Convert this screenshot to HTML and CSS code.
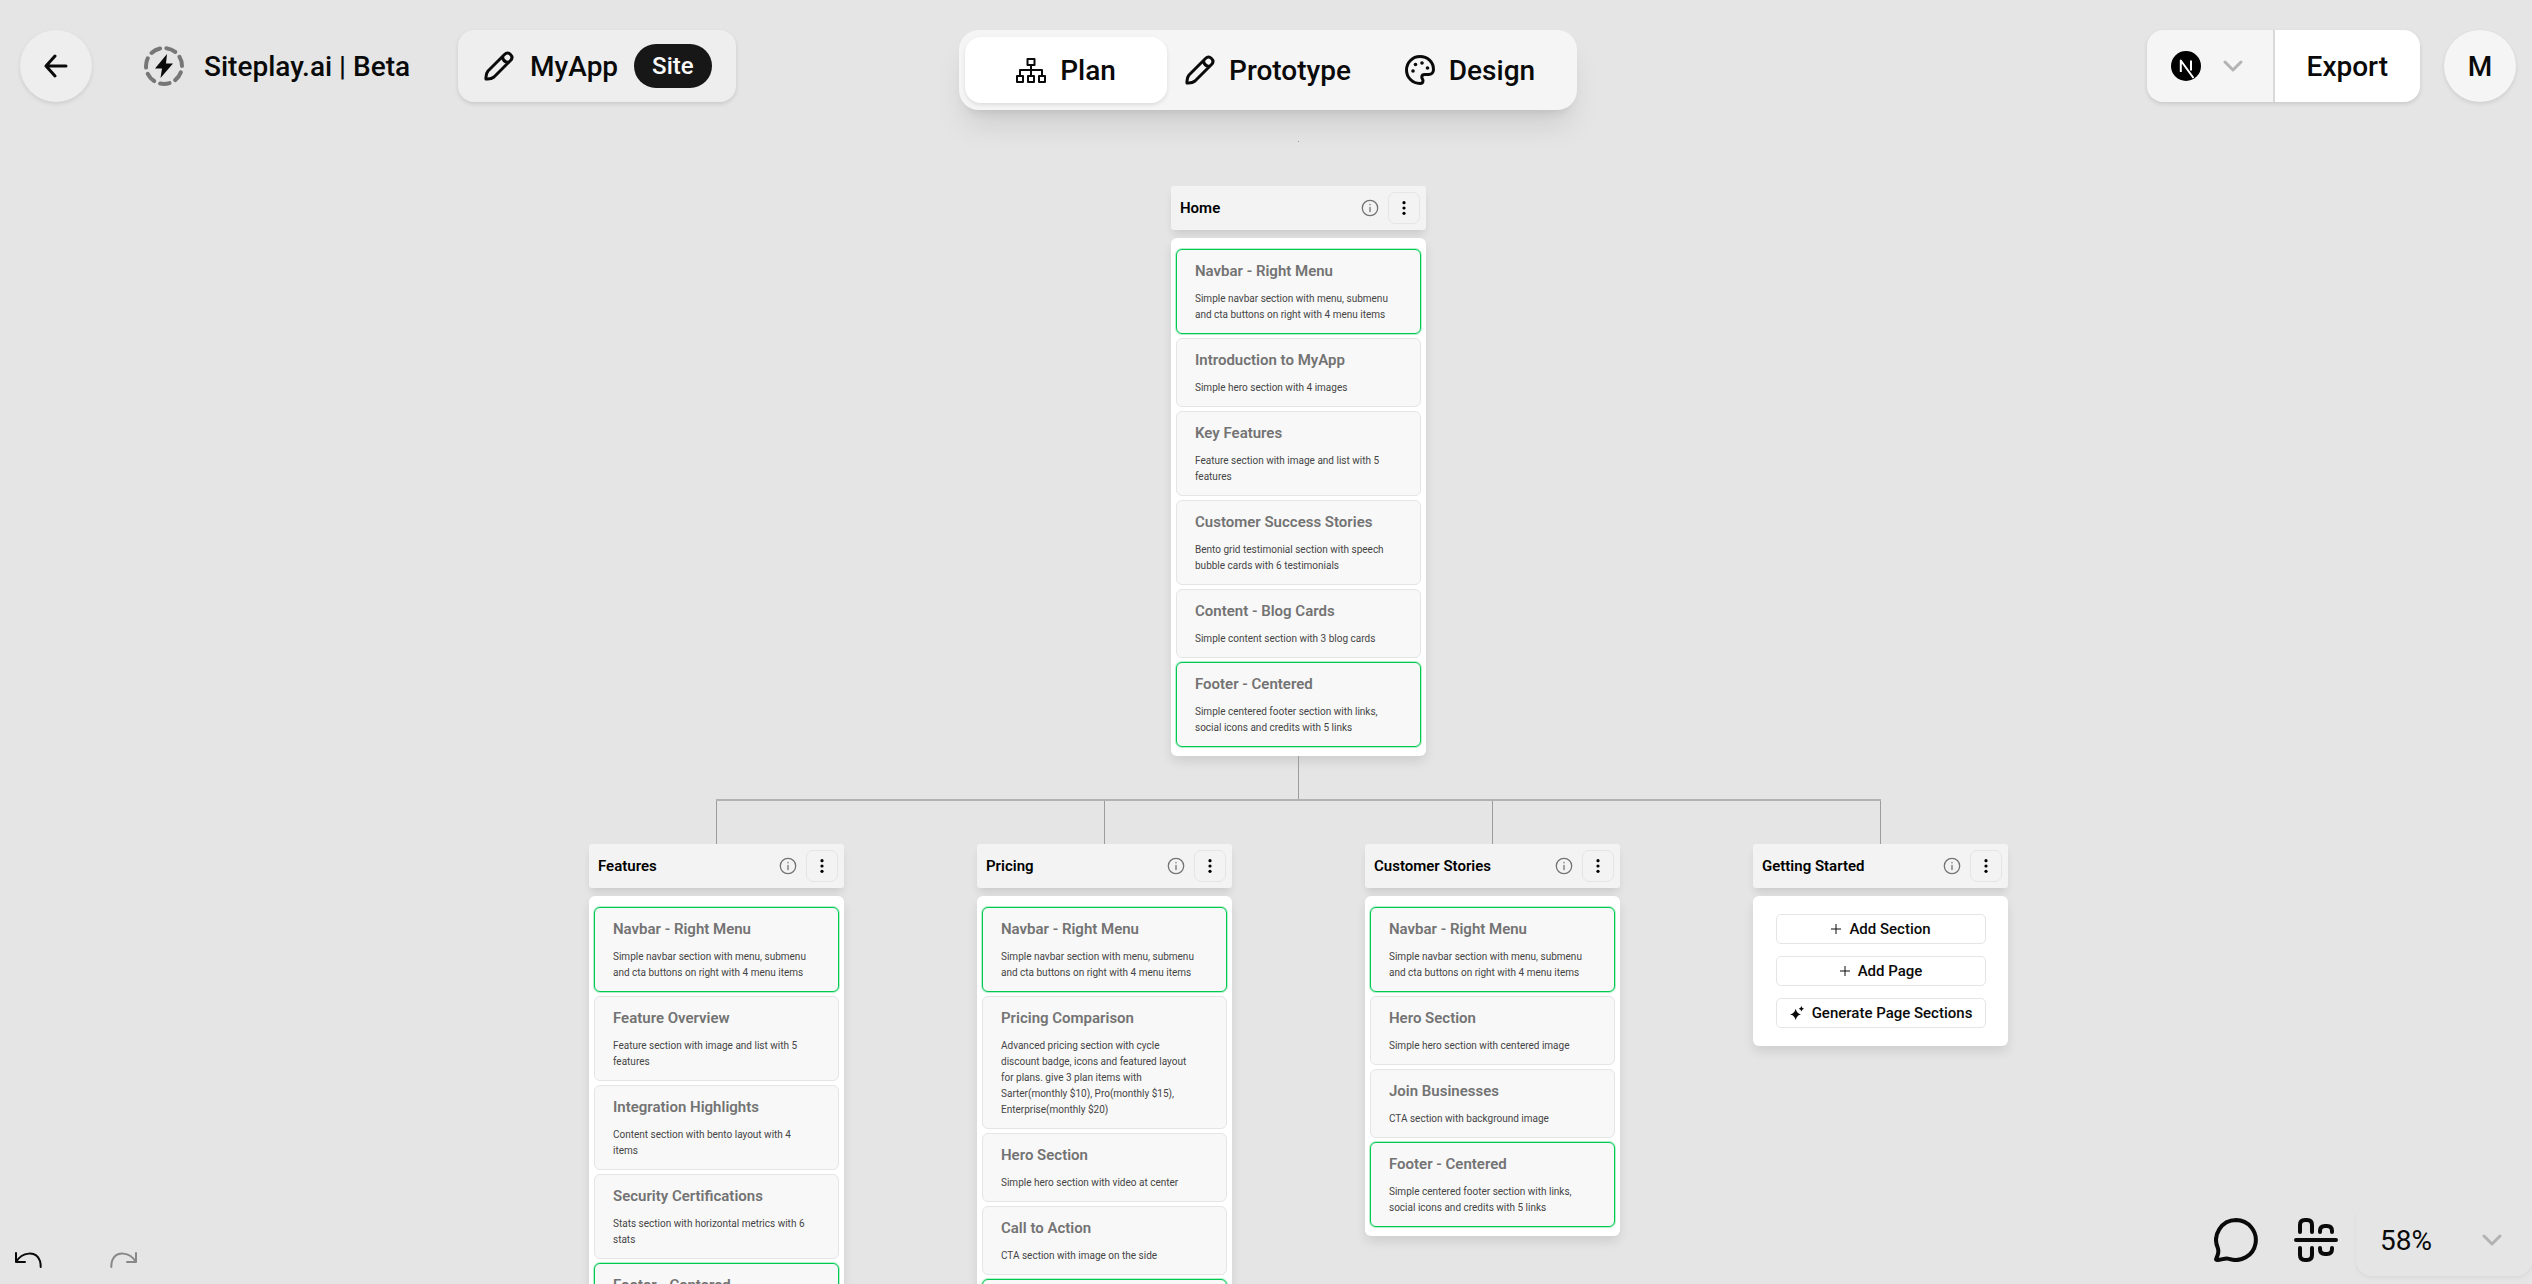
FILE: index.html
```html
<!DOCTYPE html>
<html lang="en">
<head>
<meta charset="utf-8">
<title>MyApp - Siteplay.ai</title>
<meta name="viewport" content="width=device-width, initial-scale=1">
<link rel="stylesheet" href="styles.css">
</head>
<body>
<svg class="sprite" aria-hidden="true">
  <symbol id="pencil" viewBox="0 0 30 30"><path d="M2 28Q1.500 23 4 20L20.500 3.500Q23.500 .500 26.500 3.500T26.500 9.500L10 26Q7 28.500 2 28ZM18.500 5.500Q19 11 24.500 11.500"/></symbol>
  <symbol id="chevron" viewBox="0 0 20 12"><path d="m2 2 8 8 8-8"/></symbol>
  <symbol id="info" viewBox="0 0 18 18"><circle cx="9" cy="9" r="7.700"/><path d="M9 8.500V12.500M9 5.400V5.800"/></symbol>
  <symbol id="dots" viewBox="0 0 16 16"><circle cx="8" cy="2.700" r="1.600"/><circle cx="8" cy="8" r="1.600"/><circle cx="8" cy="13.300" r="1.600"/></symbol>
  <symbol id="plus" viewBox="0 0 10 10"><path d="M5 0v10M0 5h10"/></symbol>
</svg>

<main class="canvas">
  <div class="tree">
    <span class="origin"></span>
    <article class="page">
      <header class="page-head"><h2>Home</h2><svg class="info"><use href="#info"/></svg><button class="more" aria-label="Home options"><svg><use href="#dots"/></svg></button></header>
      <div class="sections">
        <section class="item shared"><h3>Navbar - Right Menu</h3><p>Simple navbar section with menu, submenu and cta buttons on right with 4 menu items</p></section>
        <section class="item"><h3>Introduction to MyApp</h3><p>Simple hero section with 4 images</p></section>
        <section class="item"><h3>Key Features</h3><p>Feature section with image and list with 5 features</p></section>
        <section class="item"><h3>Customer Success Stories</h3><p>Bento grid testimonial section with speech bubble cards with 6 testimonials</p></section>
        <section class="item"><h3>Content - Blog Cards</h3><p>Simple content section with 3 blog cards</p></section>
        <section class="item shared"><h3>Footer - Centered</h3><p>Simple centered footer section with links, social icons and credits with 5 links</p></section>
      </div>
    </article>
    <span class="stem"></span>
    <span class="rail"></span>
    <div class="branches">
      <div class="branch">
        <span class="stem"></span>
        <article class="page">
          <header class="page-head"><h2>Features</h2><svg class="info"><use href="#info"/></svg><button class="more" aria-label="Features options"><svg><use href="#dots"/></svg></button></header>
          <div class="sections">
            <section class="item shared"><h3>Navbar - Right Menu</h3><p>Simple navbar section with menu, submenu and cta buttons on right with 4 menu items</p></section>
            <section class="item"><h3>Feature Overview</h3><p>Feature section with image and list with 5 features</p></section>
            <section class="item"><h3>Integration Highlights</h3><p>Content section with bento layout with 4 items</p></section>
            <section class="item"><h3>Security Certifications</h3><p>Stats section with horizontal metrics with 6 stats</p></section>
            <section class="item shared"><h3>Footer - Centered</h3><p>Simple centered footer section with links, social icons and credits with 5 links</p></section>
          </div>
        </article>
      </div>
      <div class="branch">
        <span class="stem"></span>
        <article class="page">
          <header class="page-head"><h2>Pricing</h2><svg class="info"><use href="#info"/></svg><button class="more" aria-label="Pricing options"><svg><use href="#dots"/></svg></button></header>
          <div class="sections">
            <section class="item shared"><h3>Navbar - Right Menu</h3><p>Simple navbar section with menu, submenu and cta buttons on right with 4 menu items</p></section>
            <section class="item"><h3>Pricing Comparison</h3><p>Advanced pricing section with cycle discount badge, icons and featured layout for plans. give 3 plan items with Sarter(monthly $10), Pro(monthly $15), Enterprise(monthly $20)</p></section>
            <section class="item"><h3>Hero Section</h3><p>Simple hero section with video at center</p></section>
            <section class="item"><h3>Call to Action</h3><p>CTA section with image on the side</p></section>
            <section class="item shared"><h3>Footer - Centered</h3><p>Simple centered footer section with links, social icons and credits with 5 links</p></section>
          </div>
        </article>
      </div>
      <div class="branch">
        <span class="stem"></span>
        <article class="page">
          <header class="page-head"><h2>Customer Stories</h2><svg class="info"><use href="#info"/></svg><button class="more" aria-label="Customer Stories options"><svg><use href="#dots"/></svg></button></header>
          <div class="sections">
            <section class="item shared"><h3>Navbar - Right Menu</h3><p>Simple navbar section with menu, submenu and cta buttons on right with 4 menu items</p></section>
            <section class="item"><h3>Hero Section</h3><p>Simple hero section with centered image</p></section>
            <section class="item"><h3>Join Businesses</h3><p>CTA section with background image</p></section>
            <section class="item shared"><h3>Footer - Centered</h3><p>Simple centered footer section with links, social icons and credits with 5 links</p></section>
          </div>
        </article>
      </div>
      <div class="branch">
        <span class="stem"></span>
        <article class="page">
          <header class="page-head"><h2>Getting Started</h2><svg class="info"><use href="#info"/></svg><button class="more" aria-label="Getting Started options"><svg><use href="#dots"/></svg></button></header>
          <div class="actions">
            <button><svg class="plus"><use href="#plus"/></svg>Add Section</button>
            <button><svg class="plus"><use href="#plus"/></svg>Add Page</button>
            <button><svg class="spark" viewBox="0 0 16 16"><path d="M6.500 3Q7.700 8.300 12.500 9.500 7.700 10.700 6.500 16 5.300 10.700 0 9.500 5.300 8.300 6.500 3ZM13 0Q13.500 2.500 16 3.200 13.500 3.900 13 6.400 12.500 3.900 10 3.200 12.500 2.500 13 0Z"/></svg>Generate Page Sections</button>
          </div>
        </article>
      </div>
    </div>
  </div>
</main>

<header class="topbar">
  <div class="top-left">
    <button class="round" aria-label="Back"><svg class="back" viewBox="0 0 24 24"><path d="M22 12H2M11 2 2 12l9 10"/></svg></button>
    <a class="brand" href="#"><svg class="logo" viewBox="0 0 40 40"><circle cx="20" cy="20" r="18" pathLength="70"/><path d="M23 8 11 22.500h7L16.500 32 29 17.500h-7Z"/></svg>Siteplay.ai | Beta</a>
    <div class="project"><svg class="pencil"><use href="#pencil"/></svg><span>MyApp</span><span class="badge">Site</span></div>
  </div>
  <nav class="tabs">
    <button class="tab active"><svg class="sitemap" viewBox="0 0 30 30"><path d="M11.500 4h7v6h-7ZM15 10v11M4 21v-6h22v6M1 21h6v6H1ZM12 21h6v6h-6ZM23 21h6v6h-6Z"/></svg>Plan</button>
    <button class="tab"><svg class="pencil"><use href="#pencil"/></svg>Prototype</button>
    <button class="tab"><svg class="palette" viewBox="0 0 30 30"><path d="M15 1.500C7.500 1.500 1.500 7.500 1.500 15S7.500 28.500 15 28.500c2 0 3-1 3-2.700 0-1.500-1.200-2-1.200-3.600 0-1.700 1.300-2.700 3-2.700h3.700c3 0 5-2 5-5C28.500 7 22.500 1.500 15 1.500Z"/><g><circle cx="8" cy="16" r="1.800"/><circle cx="10.500" cy="9.500" r="1.800"/><circle cx="17" cy="8" r="1.800"/><circle cx="22.500" cy="13" r="1.800"/></g></svg>Design</button>
  </nav>
  <div class="top-right">
    <div class="export">
      <button class="framework" aria-label="Framework: Next.js" aria-haspopup="listbox"><svg class="next" viewBox="0 0 30 30"><circle cx="15" cy="15" r="15"/><path d="M9.800 21V9.500L22.500 27M20 9.500v10"/></svg><svg class="chevron"><use href="#chevron"/></svg></button>
      <button class="export-btn">Export</button>
    </div>
    <button class="round account" aria-label="Account M">M</button>
  </div>
</header>

<footer class="bottombar">
  <div class="history">
    <button aria-label="Undo"><svg viewBox="0 0 28 18"><path d="M2 2v9h9M2 11C8 1 22-1 26 10q.7 2.500 .7 6"/></svg></button>
    <button aria-label="Redo" disabled><svg viewBox="0 0 28 18"><path d="M26 2v9h-9M26 11C20 1 6-1 2 10q-.7 2.500-.7 6"/></svg></button>
  </div>
  <div class="tools">
    <button aria-label="Comments"><svg viewBox="0 0 44 44"><path d="M22 2a20 20 0 1 1-7 38.800C11 39.500 8 42 3.200 42 1 42 2.500 40 3.500 37.500S4.800 33 3.800 30A20 20 0 0 1 22 2Z"/></svg></button>
    <button aria-label="Align"><svg viewBox="0 0 44 44"><path d="M2 22h40M6 14V7q0-5 5-5h2q5 0 5 5v7M6 30v7q0 5 5 5h2q5 0 5-5v-7M26 14v-1q0-5 5-5h2q5 0 5 5v1M26 30v1q0 5 5 5h2q5 0 5-5v-1"/></svg></button>
    <label class="zoom"><select aria-label="Zoom level"><option>58%</option><option>100%</option></select><svg class="chevron"><use href="#chevron"/></svg></label>
  </div>
</footer>
</body>
</html>
```
FILE: styles.css
```css
* { box-sizing: border-box; }
html, body { height: 100%; }
body {
  margin: 0;
  background: #e5e5e5;
  color: #0a0a0a;
  font-family: Roboto, "Liberation Sans", sans-serif;
  overflow: hidden;
  display: flex;
  flex-direction: column;
  justify-content: space-between;
}
h2, h3, p { margin: 0; }
button, select { font: inherit; color: inherit; border: 0; background: none; padding: 0; }
svg { fill: none; stroke: currentColor; flex: none; stroke-linecap: round; stroke-linejoin: round; }
.sprite { position: absolute; width: 0; height: 0; }

/* Top bar */
.topbar {
  position: relative;
  display: grid;
  grid-template-columns: 1fr auto 1fr;
  align-items: start;
  padding: 30px 16px 0 20px;
  font-size: 28px;
  font-weight: 500;
}
.top-left, .top-right { display: flex; align-items: center; }
.top-right { justify-content: flex-end; gap: 24px; }
.round {
  width: 72px;
  height: 72px;
  border-radius: 50%;
  background: #eee;
  display: flex;
  align-items: center;
  justify-content: center;
  box-shadow: 0 2px 4px rgb(0 0 0 / 10%);
}
.account { background: #f5f5f5; }
.back { width: 24px; height: 24px; stroke-width: 3; }
.brand {
  display: flex;
  align-items: center;
  gap: 20px;
  margin: 0 48px 0 52px;
  color: inherit;
  text-decoration: none;
}
.logo { width: 40px; height: 40px; }
.logo circle { stroke: #777; stroke-width: 4; stroke-dasharray: 6 4; stroke-dashoffset: -4; }
.logo path { fill: currentColor; stroke: none; }
.project {
  display: flex;
  align-items: center;
  gap: 16px;
  height: 72px;
  padding: 0 24px 0 26px;
  border-radius: 16px;
  background: #eee;
  box-shadow: 0 2px 4px rgb(0 0 0 / 12%);
}
.badge {
  height: 44px;
  padding: 0 18px;
  border-radius: 22px;
  background: #171717;
  color: #fafafa;
  font-size: 24px;
  line-height: 44px;
}
.pencil, .sitemap, .palette { width: 30px; height: 30px; stroke-width: 3; }
.sitemap { stroke-width: 2; }
.palette g { fill: currentColor; stroke: none; }
.tabs {
  display: grid;
  grid-template-columns: repeat(3, 202px);
  padding: 7px 6px;
  border-radius: 20px;
  background: #f5f5f5;
  box-shadow: 0 20px 30px -6px rgb(0 0 0 / 10%), 0 8px 12px -8px rgb(0 0 0 / 14%);
}
.tab {
  display: flex;
  align-items: center;
  justify-content: center;
  gap: 14px;
  height: 66px;
  border-radius: 16px;
}
.tab.active { background: #fff; box-shadow: 0 2px 4px rgb(0 0 0 / 10%); }
.export {
  display: flex;
  gap: 2px;
  border-radius: 16px;
  overflow: hidden;
  background: #d9d9d9;
  box-shadow: 0 2px 4px rgb(0 0 0 / 12%);
}
.framework {
  display: flex;
  align-items: center;
  gap: 22px;
  height: 72px;
  padding: 0 30px 0 24px;
  background: #f5f5f5;
}
.next { width: 30px; height: 30px; }
.next circle { fill: #000; stroke: none; }
.next path { stroke: #fff; stroke-width: 2; stroke-linecap: butt; }
.chevron { width: 20px; height: 12px; color: #b3b3b3; stroke-width: 3; }
.export-btn { padding: 0 32px; background: #fff; }

/* Site map canvas */
.canvas { position: absolute; inset: 0; overflow: hidden; }
.tree {
  position: absolute;
  left: 589px;
  top: 141px;
  display: flex;
  flex-direction: column;
  align-items: center;
}
.origin { width: 1px; height: 1px; margin-bottom: 44px; background: #999; }
.page { width: 255px; }
.page-head {
  display: flex;
  align-items: center;
  height: 44px;
  padding: 0 6px 0 9px;
  margin-bottom: 8px;
  border-radius: 3px;
  background: #f3f3f3;
  box-shadow: 0 6px 9px -2px rgb(0 0 0 / 12%);
}
.page-head h2 { flex: 1; color: #000; font-size: 15px; line-height: 18px; font-weight: 600; }
.info { width: 18px; height: 18px; margin-right: 9px; color: #737373; stroke-width: 1.3; }
.more {
  display: grid;
  place-items: center;
  width: 32px;
  height: 32px;
  border: 1px solid #e5e5e5;
  border-radius: 7px;
}
.more svg { width: 16px; height: 16px; fill: #000; stroke: none; }
.sections, .actions {
  display: flex;
  flex-direction: column;
  border-radius: 6px;
  background: #fff;
  box-shadow: 0 6px 12px -1px rgb(0 0 0 / 11%);
}
.sections { gap: 4px; padding: 11px 5px 9px; }
.item {
  padding: 12px 28px 10px 18px;
  border: 1px solid #e5e5e8;
  border-radius: 6px;
  background: #f8f8f8;
}
.item.shared { border-color: #00c951; box-shadow: 0 0 0 1px rgb(0 201 81 / 30%); }
.item h3 { margin-bottom: 11px; color: #737373; font-size: 15px; line-height: 18px; font-weight: 600; white-space: nowrap; }
.item p { color: #454545; font-size: 10px; line-height: 16px; }
.stem { display: block; width: 1px; height: 43px; background: #9c9c9c; }
.rail { align-self: stretch; height: 2px; margin: 0 127px; background: #b2b2b2; }
.branches { display: grid; grid-template-columns: repeat(4, 255px); gap: 133px; align-items: start; }
.branch { display: flex; flex-direction: column; align-items: center; }
.actions { gap: 12px; padding: 18px 22px 18px 23px; }
.actions button {
  display: flex;
  align-items: center;
  justify-content: center;
  gap: 8px;
  height: 30px;
  border: 1px solid #e5e5e5;
  border-radius: 5px;
  font-size: 15px;
  font-weight: 500;
}
.plus { width: 10px; height: 10px; stroke-width: 1; }
.spark { width: 14px; height: 14px; fill: currentColor; stroke: none; }

/* Bottom bar */
.bottombar { position: relative; display: flex; justify-content: space-between; align-items: flex-end; padding: 0 0 8px 14px; }
.history { display: flex; gap: 68px; padding-bottom: 7px; }
.history button, .tools button { display: flex; }
.history svg { width: 28px; height: 18px; stroke-width: 2; }
.history button:disabled { color: #888; }
.tools { display: flex; align-items: center; gap: 36px; }
.tools button svg { width: 44px; height: 44px; stroke-width: 4; }
.zoom {
  position: relative;
  display: flex;
  align-items: center;
  width: 176px;
  height: 72px;
  margin-left: -18px;
  border-radius: 16px;
  box-shadow: 0 2px 4px rgb(0 0 0 / 5%);
  font-size: 28px;
}
.zoom select { appearance: none; width: 100%; height: 100%; padding: 0 24px; outline: 0; }
.zoom .chevron { position: absolute; right: 30px; pointer-events: none; }
```
